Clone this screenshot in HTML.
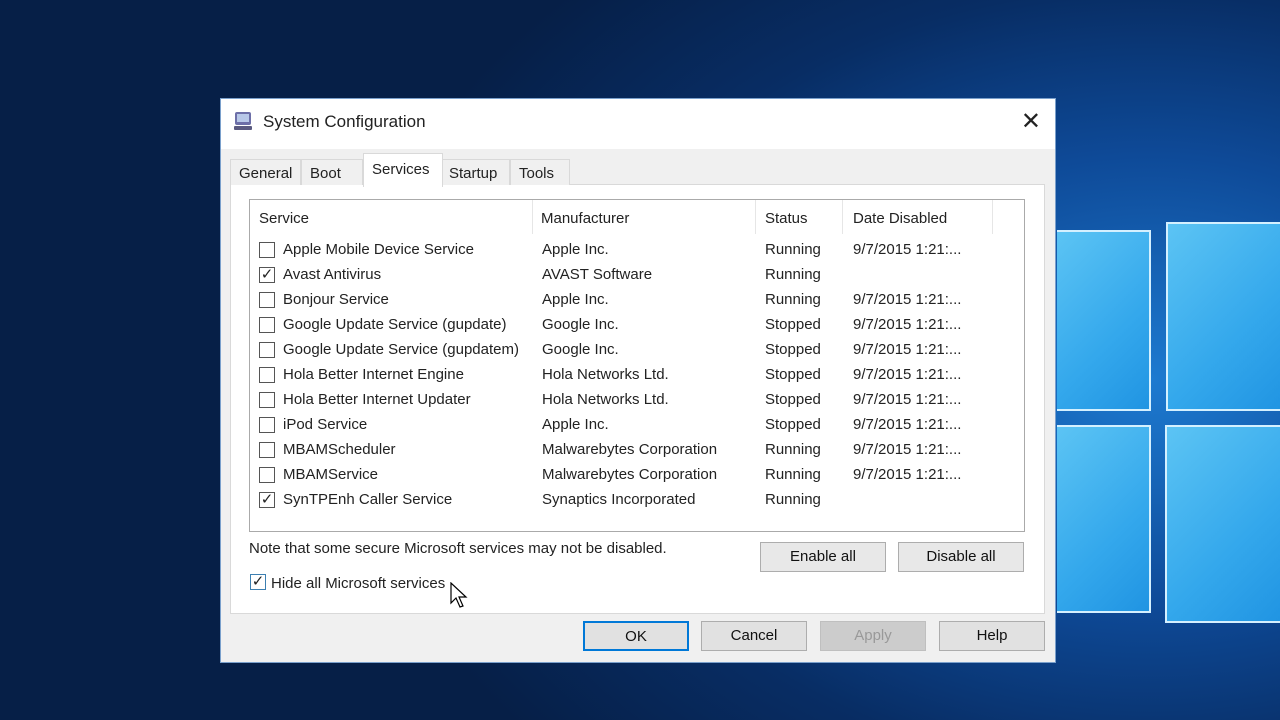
<!DOCTYPE html>
<html><head><meta charset="utf-8"><style>
*{margin:0;padding:0;box-sizing:border-box}
body{width:1280px;height:720px;overflow:hidden;position:relative;font-family:"Liberation Sans",sans-serif;
background:radial-gradient(ellipse 800px 560px at 1150px 380px,#1d7ad0 0%,#0e4a98 40%,#082d64 70%,#061f47 100%);}
.pane{position:absolute;background:linear-gradient(135deg,#5cc4f4,#34a8ec 60%,#2094e2);border:2px solid #d4f0ff}
.dlg{position:absolute;left:220px;top:98px;width:836px;height:565px;background:#f0f0f0;border:1px solid #7aa0cc}
.title{height:50px;background:#fff;position:relative}
.title span{position:absolute;left:42px;top:13px;font-size:17px;color:#222}
.x{position:absolute;right:14px;top:8px;font-size:24px;color:#222}
.tabs{position:absolute;top:58px;left:9px;height:28px}
.tab{position:absolute;top:2px;height:26px;background:#f0f0f0;border:1px solid #d9d9d9;border-bottom:none;font-size:15px;color:#222;padding:5px 0 0 8px}
.content{position:absolute;left:9px;top:85px;width:815px;height:430px;background:#fff;border:1px solid #d9d9d9}
.list{position:absolute;left:18px;top:14px;width:776px;height:333px;border:1px solid #aaa;background:#fff}
.t{position:absolute;font-size:15px;color:#222;white-space:nowrap}
.cb{position:absolute;width:16px;height:16px;border:1px solid #555;background:#fff}
.hd{position:absolute;top:0;height:34px;border-right:1px solid #e6e6e6}
.btn{position:absolute;height:30px;background:#e1e1e1;border:1px solid #adadad;font-size:15px;color:#111;text-align:center;line-height:28px}
</style></head><body>
<div class="pane" style="left:1057px;top:230px;width:94px;height:181px;border-left:none"></div>
<div class="pane" style="left:1166px;top:222px;width:120px;height:189px"></div>
<div class="pane" style="left:1057px;top:425px;width:94px;height:188px;border-left:none"></div>
<div class="pane" style="left:1165px;top:425px;width:120px;height:198px"></div>
<div class="dlg">
 <div class="title">
  <svg style="position:absolute;left:12px;top:12px" width="20" height="20"><rect x="2" y="1" width="16" height="13" rx="2" fill="#6d6fa8"/><rect x="4" y="3" width="12" height="8" fill="#b8c8e8"/><rect x="1" y="15" width="18" height="4" rx="1" fill="#5a5a80"/></svg>
  <span>System Configuration</span><div class="x">✕</div>
 </div>
 <div class="content">
  <div class="list">
   <div class="hd" style="left:0;width:283px"></div><div class="hd" style="left:283px;width:223px"></div><div class="hd" style="left:506px;width:87px"></div><div class="hd" style="left:593px;width:150px"></div>
   <div class="t" style="left:9px;top:10px">Service</div><div class="t" style="left:291px;top:10px">Manufacturer</div><div class="t" style="left:515px;top:10px">Status</div><div class="t" style="left:603px;top:10px">Date Disabled</div>
   <div id="rows"></div>
  </div>
  <div class="t" style="left:18px;top:355px">Note that some secure Microsoft services may not be disabled.</div>
  <div class="btn" style="left:529px;top:357px;width:126px;background:#e8e8e8">Enable all</div>
  <div class="btn" style="left:667px;top:357px;width:126px;background:#e8e8e8">Disable all</div>
  <div class="cb" style="left:19px;top:389px;border-color:#3c7fb1;font-size:15px;line-height:13px;text-align:center;color:#222">✓</div>
  <div class="t" style="left:40px;top:390px">Hide all Microsoft services</div>
  <svg style="position:absolute;left:219px;top:397px" width="18" height="28"><path d="M1 1 L1 21 L6 16 L10 25 L13 24 L9 15 L16 15 Z" fill="#fff" stroke="#000" stroke-width="1.2"/></svg>
 </div>
 <div class="tabs">
  <div class="tab" style="left:0;width:71px">General</div>
  <div class="tab" style="left:71px;width:62px">Boot</div>
  <div class="tab" style="left:210px;width:70px">Startup</div>
  <div class="tab" style="left:280px;width:60px">Tools</div>
  <div class="tab" style="left:133px;top:-4px;height:34px;width:80px;background:#fff;padding-top:7px;z-index:2">Services</div>
 </div>
 <div class="btn" style="left:362px;top:522px;width:106px;border:2px solid #0078d7">OK</div>
 <div class="btn" style="left:480px;top:522px;width:106px">Cancel</div>
 <div class="btn" style="left:599px;top:522px;width:106px;color:#999;background:#ccc;border-color:#bfbfbf">Apply</div>
 <div class="btn" style="left:718px;top:522px;width:106px">Help</div>
</div>
<script>
var r=[["Apple Mobile Device Service","Apple Inc.","Running",1,0],["Avast Antivirus","AVAST Software","Running",0,1],["Bonjour Service","Apple Inc.","Running",1,0],["Google Update Service (gupdate)","Google Inc.","Stopped",1,0],["Google Update Service (gupdatem)","Google Inc.","Stopped",1,0],["Hola Better Internet Engine","Hola Networks Ltd.","Stopped",1,0],["Hola Better Internet Updater","Hola Networks Ltd.","Stopped",1,0],["iPod Service","Apple Inc.","Stopped",1,0],["MBAMScheduler","Malwarebytes Corporation","Running",1,0],["MBAMService","Malwarebytes Corporation","Running",1,0],["SynTPEnh Caller Service","Synaptics Incorporated","Running",0,1]];
var h="";r.forEach(function(a,i){var y=41+i*25;
h+='<div class="cb" style="left:9px;top:'+(y+1)+'px;font-size:15px;line-height:13px;text-align:center;color:#222">'+(a[4]?'✓':'')+'</div>';
h+='<div class="t" style="left:33px;top:'+y+'px">'+a[0]+'</div><div class="t" style="left:292px;top:'+y+'px">'+a[1]+'</div><div class="t" style="left:515px;top:'+y+'px">'+a[2]+'</div>';
if(a[3])h+='<div class="t" style="left:603px;top:'+y+'px">9/7/2015 1:21:...</div>';});
document.getElementById("rows").innerHTML=h;
</script>
</body></html>
